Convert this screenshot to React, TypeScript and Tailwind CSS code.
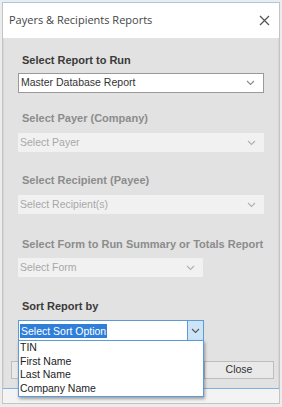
import React from "react";

const Chevron = ({ color = "#8a8a8a" }: { color?: string }) => (
  <svg width="9" height="6" viewBox="0 0 9 6" fill="none">
    <path d="M1 1 L4.5 4.5 L8 1" stroke={color} strokeWidth="1.1" />
  </svg>
);

const Label = ({ children, disabled }: { children: React.ReactNode; disabled?: boolean }) => (
  <div
    className={`pl-[4px] text-[11px] font-bold leading-[14px] ${disabled ? "text-[#8c8c8c]" : "text-[#3a3a3a]"}`}
  >
    {children}
  </div>
);

const DisabledSelect = ({ text, w }: { text: string; w: string }) => (
  <div className={`flex h-[19px] items-center justify-between bg-[#f1f1f1] pl-[2px] pr-[8px] ${w}`}>
    <span className="text-[10.5px] text-[#a8a8a8]">{text}</span>
    <Chevron color="#b0b0b0" />
  </div>
);

export default function App() {
  return (
    <div
      className="h-[407px] w-[282px] overflow-hidden bg-[#ececec] p-[2px]"
      style={{ fontFamily: "'Liberation Sans', Arial, sans-serif" }}
    >
      <div className="flex h-[402px] flex-col border border-[#c4c4c4] border-t-[#a9c7e6] bg-white">
        {/* Title bar */}
        <div className="flex h-[35px] shrink-0 items-center justify-between pl-[6px] pr-[9px]">
          <span
            className="text-[11px] text-[#444]"
            style={{ fontFamily: "'Open Sans', 'Liberation Sans', sans-serif" }}
          >
            Payers &amp; Recipients Reports
          </span>
          <svg width="11" height="11" viewBox="0 0 11 11">
            <path d="M1 1 L10 10 M10 1 L1 10" stroke="#555" strokeWidth="1.3" />
          </svg>
        </div>
        {/* Body */}
        <div className="relative flex h-[350px] shrink-0 flex-col border-x border-[#d6d6d6] bg-[#e2e2e2] pl-[14px] pt-[15px]">
          <Label>Select Report to Run</Label>
          <div className="mt-[6px] flex h-[20px] w-[246px] items-center justify-between border border-[#9a9a9a] bg-white pl-[2px] pr-[8px]">
            <span className="text-[10.5px] text-[#333]">Master Database Report</span>
            <Chevron />
          </div>

          <div className="mt-[18px]">
            <Label disabled>Select Payer (Company)</Label>
          </div>
          <div className="mt-[8px]">
            <DisabledSelect text="Select Payer" w="w-[246px]" />
          </div>

          <div className="mt-[21px]">
            <Label disabled>Select Recipient (Payee)</Label>
          </div>
          <div className="mt-[8px]">
            <DisabledSelect text="Select Recipient(s)" w="w-[246px]" />
          </div>

          <div className="mt-[23px]">
            <Label disabled>Select Form to Run Summary or Totals Report</Label>
          </div>
          <div className="mt-[7px]">
            <DisabledSelect text="Select Form" w="w-[185px]" />
          </div>

          <div className="mt-[22px]">
            <Label>Sort Report by</Label>
          </div>
          <div className="mt-[7px] flex h-[21px] w-[186px] border border-[#5a9bd8] bg-white">
            <div className="flex flex-1 items-center pl-[1px]">
              <span className="bg-[#2f7fd9] px-[1px] text-[10.5px] leading-[14px] text-white">Select Sort Option</span>
            </div>
            <div className="flex w-[16px] items-center justify-center border-l border-[#5a9bd8] bg-[#cde4f7]">
              <Chevron color="#555" />
            </div>
          </div>

          {/* Buttons row */}
          <div className="-ml-[7px] mt-[20px] flex h-[18px] w-[263px] justify-between">
            <div className="w-[70px] border border-[#bdbdbd] bg-[#e9e9e9]" />
            <div className="flex w-[70px] items-center justify-center border border-[#bdbdbd] bg-[#e9e9e9] text-[10.5px] text-[#333]">
              Close
            </div>
          </div>

          {/* Dropdown list overlay */}
          <div className="absolute left-[14px] top-[302px] z-10 flex w-[186px] flex-col border border-[#5a9bd8] bg-white pb-[1px] pl-[1px] text-[10.5px] leading-[13.5px] text-[#222] shadow-[1px_2px_3px_rgba(0,0,0,0.35)]">
            <span>TIN</span>
            <span>First Name</span>
            <span>Last Name</span>
            <span>Company Name</span>
          </div>
        </div>
        <div className="h-[1px] shrink-0 bg-[#7fb2e0]" />
        <div className="flex-1 bg-[#f3f3f3]" />
      </div>
    </div>
  );
}
